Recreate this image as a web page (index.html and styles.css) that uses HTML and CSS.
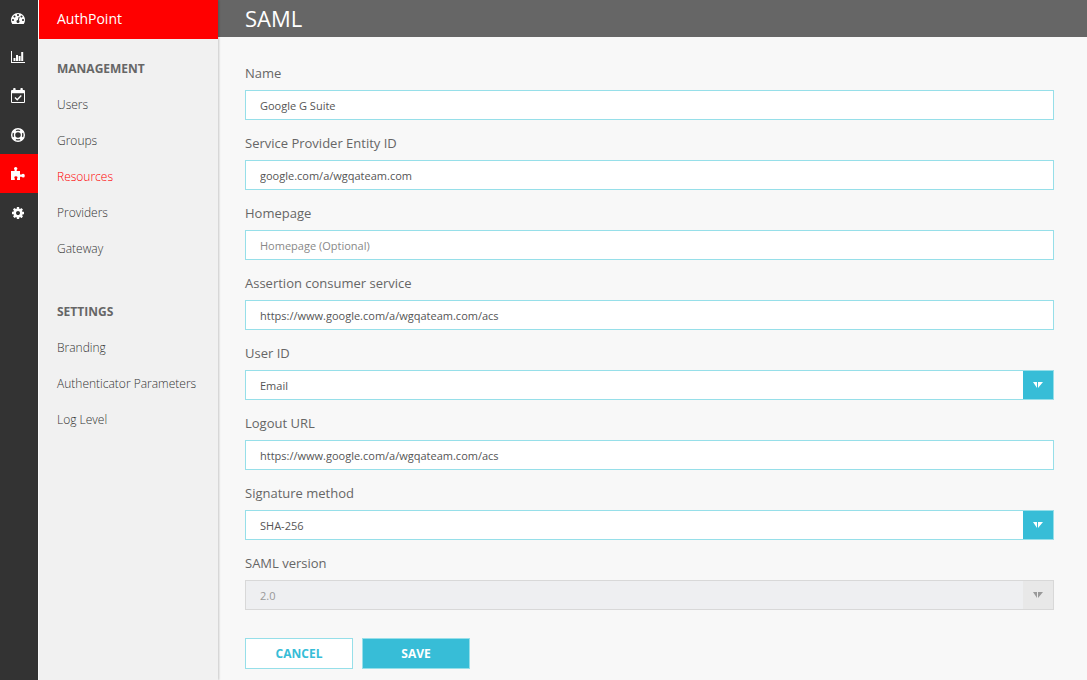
FILE: index.html
```
<!DOCTYPE html>
<html lang="en">
<head>
<meta charset="utf-8">
<meta name="viewport" content="width=device-width, initial-scale=1">
<title>AuthPoint - SAML</title>
<link rel="stylesheet" href="styles.css">
</head>
<body>
<div class="app">
  <nav class="rail" aria-label="Sections">
    <a class="rail-link" href="#" aria-label="Dashboard">
      <svg class="icon" viewBox="0 0 1792 1792"><path d="M384 1152q0-53-37.500-90.500t-90.500-37.500-90.500 37.500-37.500 90.500 37.500 90.500 90.500 37.500 90.500-37.500 37.500-90.500zm192-448q0-53-37.500-90.500t-90.500-37.500-90.500 37.500-37.500 90.500 37.500 90.500 90.500 37.500 90.500-37.500 37.500-90.500zm428 481l101-382q6-26-7.500-48.500t-38.500-29.500-48 6.500-30 39.500l-101 382q-60 5-107 43.500t-63 98.500q-20 77 20 146t117 89 146-20 89-117q16-60-6-117t-72-91zm660-33q0-53-37.500-90.500t-90.500-37.500-90.500 37.500-37.500 90.500 37.500 90.500 90.500 37.500 90.500-37.500 37.500-90.500zm-640-640q0-53-37.500-90.500t-90.500-37.500-90.500 37.500-37.500 90.500 37.500 90.500 90.500 37.500 90.500-37.500 37.500-90.500zm448 192q0-53-37.500-90.500t-90.500-37.500-90.500 37.500-37.500 90.500 37.500 90.500 90.500 37.500 90.500-37.500 37.500-90.500zm320 448q0 261-141 483-19 29-54 29h-1402q-35 0-54-29-141-221-141-483 0-182 71-348t191-286 286-191 348-71 348 71 286 191 191 286 71 348z"/></svg>
    </a>
    <a class="rail-link" href="#" aria-label="Reports">
      <svg class="icon" viewBox="0 0 14 14"><path d="M0 1h1v11h13v1H0zM2.500 8h2v3h-2zM5 5h2v6H5zM7.600 6h2v5h-2zM10.200 2h2v9h-2z"/></svg>
    </a>
    <a class="rail-link" href="#" aria-label="Schedule">
      <svg class="icon icon-tall" viewBox="0 0 14 16"><path fill-rule="evenodd" d="M1 2h1.200V.8q0-.8.800-.8h.8q.8 0 .8.800V2h4.800V.8q0-.8.800-.8h.8q.8 0 .8.800V2H13q1 0 1 1v11q0 1-1 1H1q-1 0-1-1V3q0-1 1-1zM1 5.200V14h12V5.200z"/><path class="stroke" d="M4 9.500l2.200 2.200L10.300 7.500"/></svg>
    </a>
    <a class="rail-link" href="#" aria-label="Support">
      <svg class="icon" viewBox="0 0 14 14"><circle class="ring" cx="7" cy="7" r="6.300"/><circle class="ring" cx="7" cy="7" r="3.500"/><path class="ring-bars" d="M2.500 2.500l2.200 2.200M11.500 2.500L9.300 4.700M2.500 11.500l2.200-2.200M11.500 11.500L9.300 9.300"/></svg>
    </a>
    <a class="rail-link rail-active" href="#" aria-label="AuthPoint">
      <svg class="icon" viewBox="0 0 14 14"><path d="M0 4h3.600V2.700Q3 2.200 3 1.500 3 0 4.700 0t1.700 1.500q0 .7-.7 1.200V4H9v3.600h1.600q.5-.8 1.500-.8 1.700 0 1.700 1.900t-1.700 1.900q-1 0-1.500-.8H9V13H6v-1.500q.5-.4.500-1 0-1.200-1.600-1.200t-1.600 1.200q0 .6.500 1V13H0z"/></svg>
    </a>
    <a class="rail-link" href="#" aria-label="Administration">
      <svg class="icon" viewBox="0 0 1792 1792"><path d="M1152 896q0-106-75-181t-181-75-181 75-75 181 75 181 181 75 181-75 75-181zm512-109v222q0 12-8 23t-20 13l-185 28q-19 54-39 91 35 50 107 138 10 12 10 25t-9 23q-27 37-99 108t-94 71q-12 0-26-9l-138-108q-44 23-91 38-16 136-29 186-7 28-36 28h-222q-14 0-24.500-8.500t-11.500-21.500l-28-184q-49-16-90-37l-141 107q-10 9-25 9-14 0-25-11-126-114-165-168-7-10-7-23 0-12 8-23 15-21 51-66.500t54-70.500q-27-50-41-99l-183-27q-13-2-21-12.500t-8-23.500v-222q0-12 8-23t19-13l186-28q14-46 39-92-40-57-107-138-10-12-10-24 0-10 9-23 26-36 98.500-107.500t94.500-71.500q13 0 26 10l138 107q44-23 91-38 16-136 29-186 7-28 36-28h222q14 0 24.500 8.500t11.500 21.500l28 184q49 16 90 37l142-107q9-9 24-9 13 0 25 10 129 119 165 170 7 8 7 22 0 12-8 23-15 21-51 66.500t-54 70.500q26 50 41 98l183 28q13 2 21 12.500t8 23.500z"/></svg>
    </a>
  </nav>

  <aside class="sidebar">
    <div class="brand">AuthPoint</div>
    <nav class="menu" aria-label="AuthPoint">
      <section class="menu-group">
        <h2 class="menu-title">MANAGEMENT</h2>
        <a class="menu-link" href="#">Users</a>
        <a class="menu-link" href="#">Groups</a>
        <a class="menu-link menu-active" href="#" aria-current="page">Resources</a>
        <a class="menu-link" href="#">Providers</a>
        <a class="menu-link" href="#">Gateway</a>
      </section>
      <section class="menu-group">
        <h2 class="menu-title">SETTINGS</h2>
        <a class="menu-link" href="#">Branding</a>
        <a class="menu-link" href="#">Authenticator Parameters</a>
        <a class="menu-link" href="#">Log Level</a>
      </section>
    </nav>
  </aside>

  <main class="main">
    <header class="header"><h1 class="title">SAML</h1></header>
    <form class="form">
      <div class="field">
        <label class="label" for="name">Name</label>
        <input class="control" id="name" type="text" value="Google G Suite">
      </div>
      <div class="field">
        <label class="label" for="entity">Service Provider Entity ID</label>
        <input class="control" id="entity" type="text" value="google.com/a/wgqateam.com">
      </div>
      <div class="field">
        <label class="label" for="homepage">Homepage</label>
        <input class="control" id="homepage" type="text" placeholder="Homepage (Optional)">
      </div>
      <div class="field">
        <label class="label" for="acs">Assertion consumer service</label>
        <input class="control" id="acs" type="text" value="https://www.google.com/a/wgqateam.com/acs">
      </div>
      <div class="field">
        <label class="label" for="user">User ID</label>
        <div class="select">
          <select class="control" id="user"><option>Email</option></select>
          <span class="arrow"><svg class="arrow-icon" viewBox="0 0 10 6"><path d="M0 0h4v6zM5 6V0h5z"/></svg></span>
        </div>
      </div>
      <div class="field">
        <label class="label" for="logout">Logout URL</label>
        <input class="control" id="logout" type="text" value="https://www.google.com/a/wgqateam.com/acs">
      </div>
      <div class="field">
        <label class="label" for="signature">Signature method</label>
        <div class="select">
          <select class="control" id="signature"><option>SHA-256</option></select>
          <span class="arrow"><svg class="arrow-icon" viewBox="0 0 10 6"><path d="M0 0h4v6zM5 6V0h5z"/></svg></span>
        </div>
      </div>
      <div class="field">
        <label class="label" for="version">SAML version</label>
        <div class="select select-disabled">
          <select class="control" id="version" disabled><option>2.0</option></select>
          <span class="arrow"><svg class="arrow-icon" viewBox="0 0 10 6"><path d="M0 0h4v6zM5 6V0h5z"/></svg></span>
        </div>
      </div>
      <div class="actions">
        <button class="button" type="button">CANCEL</button>
        <button class="button button-primary" type="button">SAVE</button>
      </div>
    </form>
  </main>
</div>
</body>
</html>
```
FILE: styles.css
```
* {
  box-sizing: border-box;
}

body {
  margin: 0;
  background: #f8f8f8;
  color: #666;
  font-family: "Open Sans", "Noto Sans", sans-serif;
  font-size: 12px;
}

.app {
  display: flex;
  min-height: 100vh;
}

.rail {
  flex: none;
  width: 38px;
  background: #333;
}

.rail-link {
  display: flex;
  align-items: center;
  height: 39px;
  padding-left: 11px;
  color: #fff;
}

.rail-link:first-child {
  height: 36px;
  margin-bottom: 1px;
}

.rail-active {
  background: #f00;
}

.icon {
  width: 14px;
  height: 14px;
  fill: currentColor;
}

.icon-tall {
  height: 16px;
}

.stroke,
.ring,
.ring-bars {
  fill: none;
  stroke: currentColor;
  stroke-width: 1.4;
}

.ring-bars {
  stroke-width: 3.6;
}

.sidebar {
  z-index: 1;
  flex: none;
  width: 180px;
  background: #f1f1f1;
  border-left: 1px solid #fafafa;
  box-shadow: 1px 0 2px rgba(0, 0, 0, 0.2);
}

.brand {
  padding-left: 18px;
  background: #f00;
  color: #fff;
  font-size: 14px;
  line-height: 38px;
  border-bottom: 1px solid #f00;
}

.menu {
  display: flex;
  flex-direction: column;
  gap: 27px;
  padding: 12px 0 0 18px;
}

.menu-title,
.menu-link {
  display: block;
  margin: 0;
  color: #333;
  font-size: 12px;
  font-weight: 300;
  line-height: 36px;
  text-decoration: none;
  white-space: nowrap;
}

.menu-title {
  color: #666;
  font-weight: 700;
}

.menu-active {
  color: #f00;
}

.main {
  flex: 1;
  min-width: 0;
}

.header {
  padding-left: 27px;
  background: #666;
}

.title {
  margin: 0;
  color: #fff;
  font-size: 22px;
  font-weight: 400;
  line-height: 36px;
  border-bottom: 1px solid #666;
}

.form {
  display: flex;
  flex-direction: column;
  gap: 13px;
  padding: 26px 33px 10px 27px;
}

.label {
  display: block;
  height: 27px;
  font-size: 13px;
  line-height: 20px;
}

.control {
  display: block;
  width: 100%;
  height: 30px;
  padding: 0 14px;
  appearance: none;
  background: #fff;
  border: 1px solid #96dfe9;
  border-radius: 0;
  color: #555;
  font-family: inherit;
  font-size: 11px;
}

.control::placeholder {
  color: #888;
  opacity: 1;
}

.select {
  position: relative;
}

.arrow {
  position: absolute;
  top: 1px;
  right: 1px;
  bottom: 1px;
  display: flex;
  align-items: center;
  justify-content: center;
  width: 30px;
  background: #37bdd7;
  color: #fff;
  pointer-events: none;
}

.arrow-icon {
  width: 10px;
  height: 6px;
  fill: currentColor;
}

.select-disabled .control {
  background: #eeeff1;
  border-color: #d8d8d8;
  color: #999;
  opacity: 1;
}

.select-disabled .arrow {
  background: #e8e8e8;
  color: #999;
}

.actions {
  display: flex;
  gap: 9px;
  padding-top: 15px;
}

.button {
  width: 108px;
  height: 31px;
  padding: 0;
  background: #fff;
  border: 1px solid #96dfe9;
  color: #37bdd7;
  font-family: inherit;
  font-size: 12px;
  font-weight: 700;
}

.button-primary {
  background: #37bdd7;
  color: #fff;
}
```
